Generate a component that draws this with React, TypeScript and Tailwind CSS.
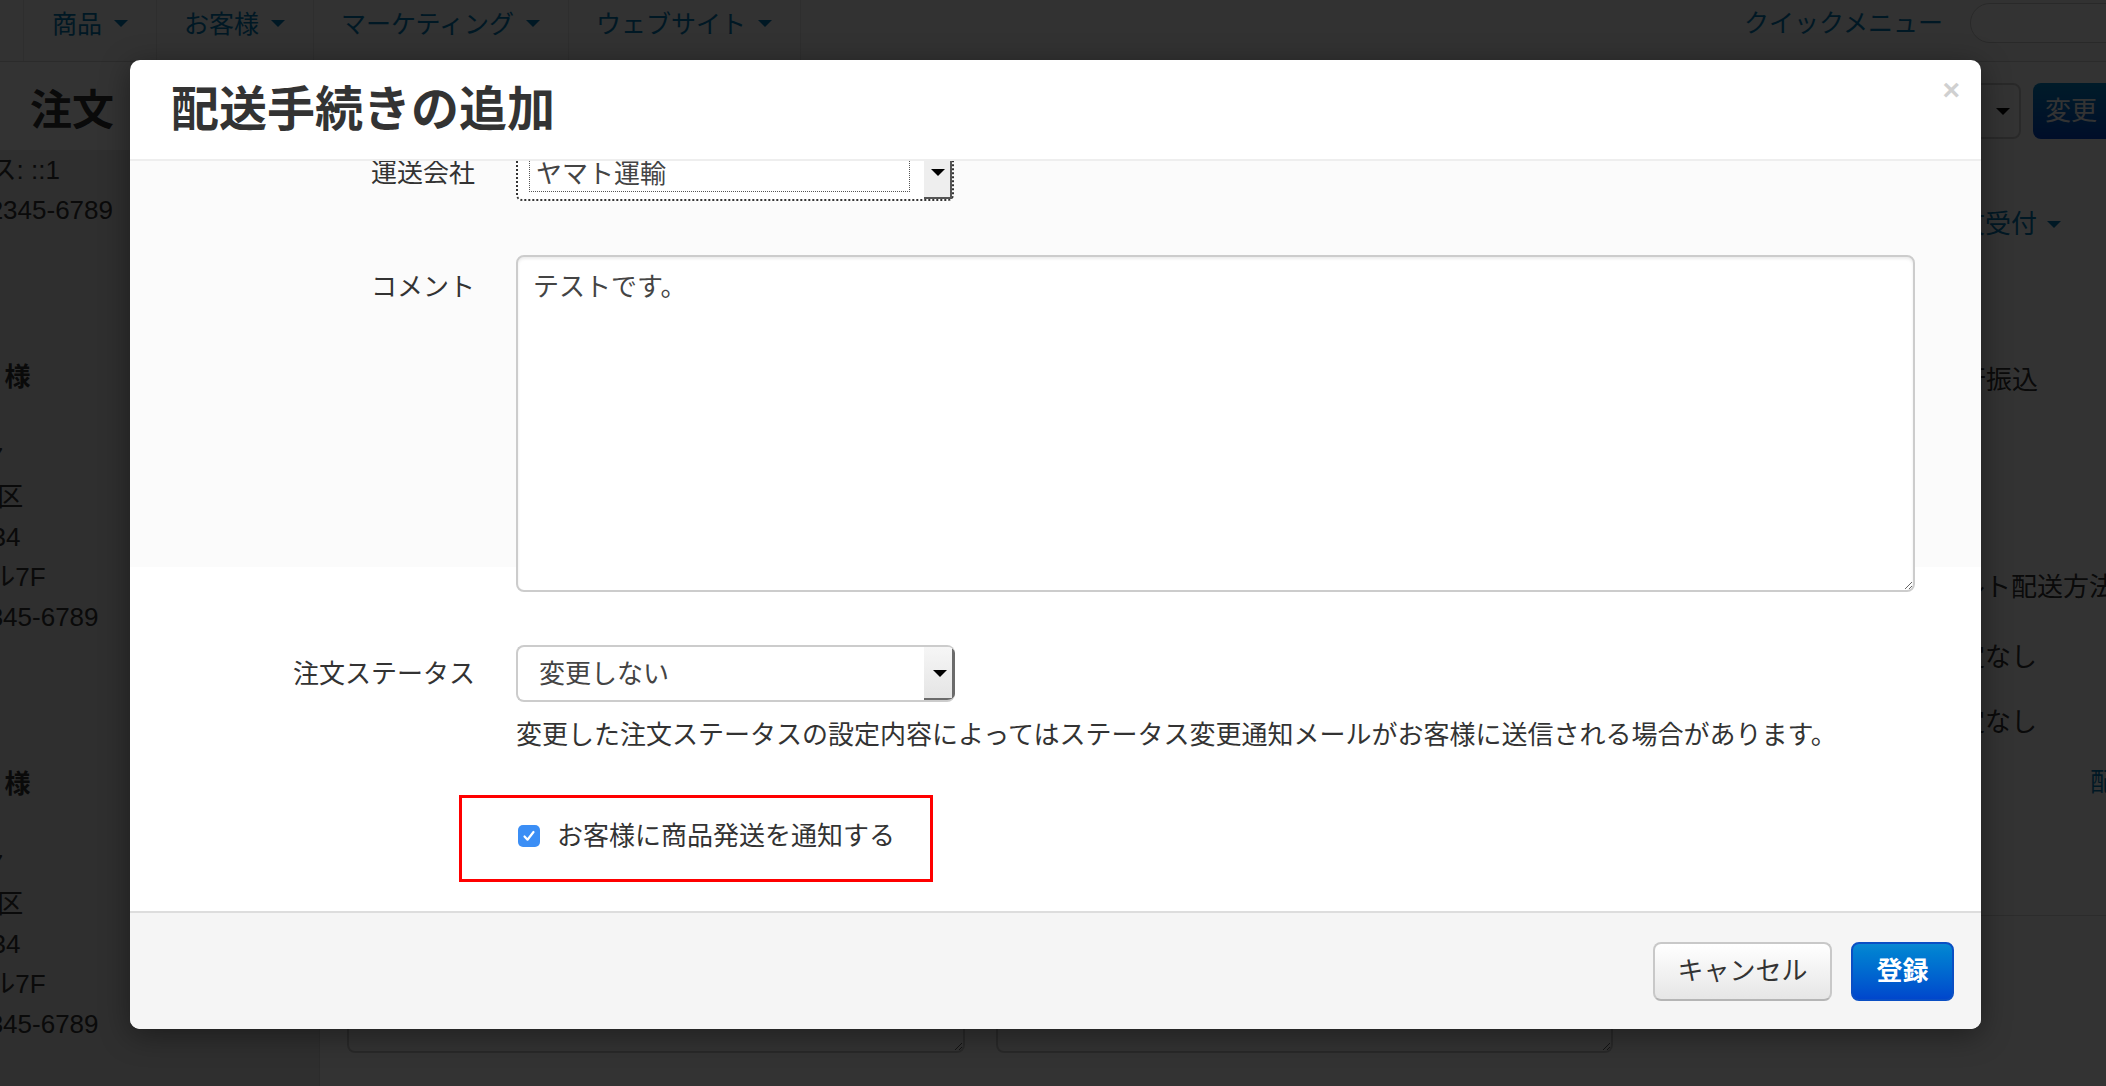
import type { FC } from 'react'
import clsx from 'clsx'

const Caret: FC<{ className?: string }> = ({ className }) => (
  <span className={clsx('inline-block h-0 w-0 border-x-[7px] border-t-[7px] border-x-transparent', className)} />
)

const navItems = ['商品', 'お客様', 'マーケティング', 'ウェブサイト']

const AddressBlock = () => (
  <div className="mt-[127px]">
    <div className="font-bold">テスト 太郎 様</div>
    <div>&nbsp;</div>
    <div>〒 123-4567</div>
    <div>東京都 新宿区</div>
    <div>西新宿 1-2-34</div>
    <div>サンプルビル7F</div>
    <div>TEL: 0120-345-6789</div>
  </div>
)

const Checkbox = () => (
  <span className="flex h-[22px] w-[22px] items-center justify-center rounded-[5px] bg-[#3b8ef5]">
    <svg width="16" height="16" viewBox="0 0 16 16" fill="none">
      <path d="M3.5 8.5l3 3.2L12.5 4" stroke="white" strokeWidth="2.2" strokeLinecap="round" strokeLinejoin="round" />
    </svg>
  </span>
)

export default function App() {
  return (
    <div className="relative h-[1086px] w-[2106px] overflow-hidden bg-white font-['Liberation_Sans','Noto_Sans_CJK_JP',sans-serif] text-[#333]">
      {/* page behind the modal */}
      <nav className="flex h-[62px] border-b border-[#d4d4d4] bg-[#f7f7f7] pl-[23px] text-[25px] leading-[30px] text-[#0077b3]">
        {navItems.map((item, i) => (
          <div
            key={item}
            className={clsx(
              'flex h-full items-center gap-[12px] border-r border-[#e3e3e3] pb-[14px] pr-[28px]',
              i === 0 ? 'border-l pl-[28px]' : 'pl-[27px]',
            )}
          >
            <span>{item}</span>
            <Caret className="border-t-[#0077b3]" />
          </div>
        ))}
        <div className="-mr-[100px] ml-auto flex h-[46px] items-center gap-[27px]">
          <span>クイックメニュー</span>
          <div className="h-[40px] w-[236px] rounded-full border border-[#cccccc] bg-white" />
        </div>
      </nav>

      <div className="flex h-[88px] items-center pl-[30px] pt-[10px]">
        <h1 className="text-[42px] font-bold leading-none">注文</h1>
        <div className="-mr-[60px] ml-auto flex gap-[12px]">
          <div className="flex h-[56px] w-[280px] items-center justify-end rounded-[8px] border-2 border-[#cccccc] bg-white pr-[9px]">
            <Caret className="border-t-black" />
          </div>
          <div className="flex h-[56px] w-[133px] items-center rounded-[8px] bg-linear-to-b from-[#0088cc] to-[#0044cc] pl-[12px] text-[26px] text-white">
            変更
          </div>
        </div>
      </div>

      <div className="flex h-[936px]">
        <aside className="w-[320px] shrink-0 overflow-hidden border-r border-[#dddddd] bg-[#e8e8e8] text-[26px] leading-[40px]">
          <div className="-ml-[140px] whitespace-nowrap">
            <div className="pl-[28px]">IPアドレス: ::1</div>
            <div>TEL: 0120-2345-6789</div>
            <AddressBlock />
            <AddressBlock />
          </div>
        </aside>

        <main className="flex min-w-0 flex-1 flex-col justify-end pb-[33px] pl-[27px]">
          <div className="flex gap-[31px]">
            <textarea className="h-[153px] w-[618px] rounded-[8px] border-2 border-[#cccccc]" />
            <textarea className="h-[153px] w-[617px] rounded-[8px] border-2 border-[#cccccc]" />
          </div>
        </main>

        <aside className="w-[169px] shrink-0 whitespace-nowrap text-[26px] leading-[40px]">
          <div className="h-[712px] border-b border-[#dddddd]">
            <div className="ml-[-4px] mt-[54px] flex items-center gap-[10px] text-[#0077b3]">
              <span>注文受付</span>
              <Caret className="border-t-[#0077b3]" />
            </div>
            <div className="ml-[-3px] mt-[116px]">銀行振込</div>
            <div className="-ml-[56px] mt-[167px]">デフォルト配送方法</div>
            <div className="ml-[-4px] mt-[30px]">指定なし</div>
            <div className="ml-[-4px] mt-[25px]">指定なし</div>
            <div className="mt-[20px] pl-[153px] text-[#0077b3]">配送先を変更</div>
          </div>
        </aside>
      </div>

      {/* backdrop */}
      <div className="absolute inset-0 bg-black/80" />

      {/* modal */}
      <div className="absolute left-[130px] top-[60px] flex h-[969px] w-[1851px] flex-col overflow-hidden rounded-[10px] bg-white text-[26px] leading-[26px] shadow-[0_6px_30px_rgba(0,0,0,0.4)]">
        <div className="relative flex h-[101px] shrink-0 items-center border-b-2 border-[#eeeeee] pl-[41px]">
          <h3 className="text-[48px] font-bold leading-none text-[#333]">配送手続きの追加</h3>
          <span className="absolute right-[21px] top-[15px] text-[30px] font-bold leading-none text-[#d0d0d0]">×</span>
        </div>

        <div className="relative h-[750px] shrink-0 overflow-hidden">
          <div className="absolute inset-x-0 top-0 h-[406px] bg-[#fbfbfb]" />
          <div className="relative -mt-[17px] flex flex-col">
            <div className="flex items-center gap-[41px] pr-[66px]">
              <label className="w-[345px] shrink-0 text-right">運送会社</label>
              <div className="flex h-[57px] w-[438px] rounded-[6px] border-2 border-dotted border-[#333333] bg-white">
                <div className="mb-[7px] ml-[11px] mt-[10px] flex flex-1 items-center border border-dotted border-[#555555] pl-[6px] text-[#444]">
                  ヤマト運輸
                </div>
                <div className="ml-[14px] flex w-[28px] items-center justify-center bg-[#eeeeee] shadow-[inset_-2px_-2px_0_#555555]">
                  <Caret className="border-x-[6px] border-t-black" />
                </div>
              </div>
            </div>

            <div className="mt-[54px] flex items-start gap-[41px] pr-[66px]">
              <label className="w-[345px] shrink-0 pt-[19px] text-right">コメント</label>
              <textarea
                defaultValue="テストです。"
                className="h-[337px] min-w-0 flex-1 rounded-[8px] border-2 border-[#cccccc] bg-white px-[15px] pt-[17px] leading-[26px] text-[#444] shadow-[inset_0_2px_3px_rgba(0,0,0,0.08)] outline-none"
              />
            </div>

            <div className="mt-[53px] flex items-center gap-[41px] pr-[66px]">
              <label className="w-[345px] shrink-0 text-right">注文ステータス</label>
              <div className="flex h-[57px] w-[439px] overflow-hidden rounded-[8px] border-2 border-r-0 border-[#cccccc] bg-white">
                <div className="flex flex-1 items-center pl-[21px] text-[#444]">変更しない</div>
                <div className="flex w-[31px] items-center justify-center bg-linear-to-b from-[#f6f6f6] to-[#e4e4e4] shadow-[inset_-3px_-2px_0_#6b6b6b]">
                  <Caret className="border-x-[6px] border-t-black" />
                </div>
              </div>
            </div>

            <p className="ml-[386px] mt-[15px] leading-[36px]">
              変更した注文ステータスの設定内容によってはステータス変更通知メールがお客様に送信される場合があります。
            </p>

            <div className="ml-[329px] mt-[42px] flex h-[87px] w-[474px] items-center gap-[17px] border-[3px] border-[#ff0000] pb-[6px] pl-[56px]">
              <Checkbox />
              <span>お客様に商品発送を通知する</span>
            </div>
          </div>
        </div>

        <div className="flex h-[118px] shrink-0 items-center justify-end gap-[19px] border-t-2 border-[#dddddd] bg-[#f5f5f5] pr-[27px]">
          <button className="h-[59px] w-[179px] rounded-[8px] border-2 border-[#c8c8c8] border-b-[#b5b5b5] bg-linear-to-b from-white to-[#e6e6e6] text-[26px] text-[#333]">
            キャンセル
          </button>
          <button className="h-[59px] w-[103px] rounded-[8px] border-2 border-[#0a4fc4] bg-linear-to-b from-[#0a88d2] to-[#0046cc] text-[26px] font-bold text-white">
            登録
          </button>
        </div>
      </div>
    </div>
  )
}
